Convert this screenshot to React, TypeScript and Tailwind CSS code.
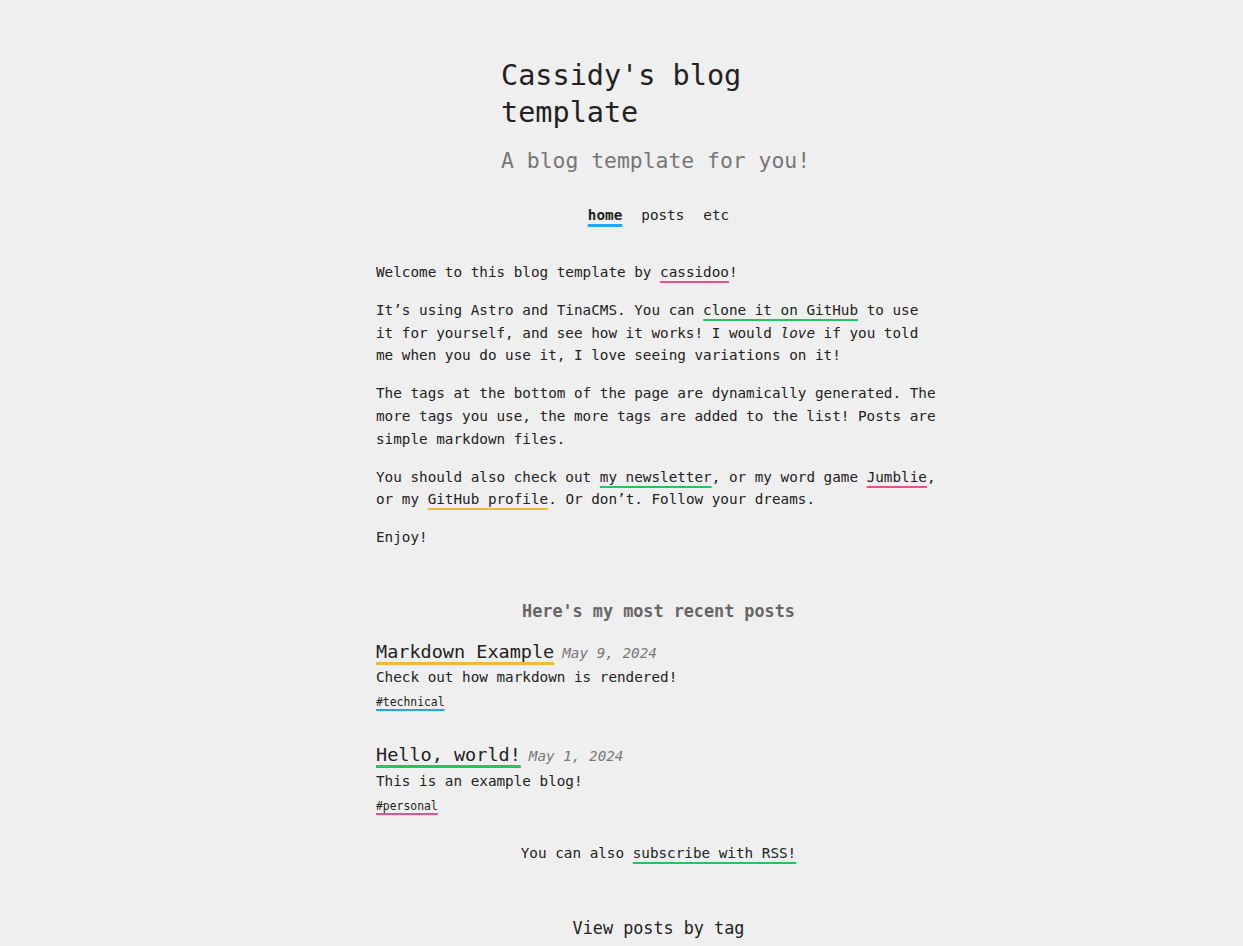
import React from "react";

const mono = "font-['DejaVu_Sans_Mono','Liberation_Mono',monospace]";

function A({ c, children }: { c: string; children: React.ReactNode }) {
  return (
    <a
      href="#"
      className={`underline decoration-2 underline-offset-[4px] ${c}`}
    >
      {children}
    </a>
  );
}

function Post({
  title,
  date,
  desc,
  tag,
  tc,
  gc,
}: {
  title: string;
  date: string;
  desc: string;
  tag: string;
  tc: string;
  gc: string;
}) {
  return (
    <div>
      <div className="leading-[26.5px]">
        <a
          href="#"
          className={`text-[18.5px] underline decoration-[3px] underline-offset-[4px] ${tc}`}
        >
          {title}
        </a>
        <span className="ml-2 text-[14.3px] italic text-[#777]">{date}</span>
      </div>
      <p className="leading-[22.8px]">{desc}</p>
      <div className="mt-[3px] leading-[18px]">
        <a
          href="#"
          className={`text-[11.4px] underline decoration-2 underline-offset-[3px] ${gc}`}
        >
          {tag}
        </a>
      </div>
    </div>
  );
}

export default function App() {
  return (
    <div className={`min-h-screen bg-[#efefef] text-[#222] ${mono} text-[14.3px]`}>
      <div className="ml-[376px] w-[565px] pt-[57px] pb-10">
        <header className="mx-auto w-[315px]">
          <h1 className="text-[28.5px] leading-[37px] text-[#222]">
            Cassidy's blog template
          </h1>
          <p className="mt-[15px] text-[21.4px] leading-[30px] text-[#777]">
            A blog template for you!
          </p>
        </header>
        <nav className="mt-[28px] flex justify-center gap-[19px] leading-[23px]">
          <a
            href="#"
            className="font-bold underline decoration-[3px] decoration-[#1ea7fd] underline-offset-[4px]"
          >
            home
          </a>
          <a href="#">posts</a>
          <a href="#">etc</a>
        </nav>
        <main className="mt-[34px] leading-[22.8px]">
          <div className="flex flex-col gap-[15px]">
            <p>
              Welcome to this blog template by{" "}
              <A c="decoration-[#ec4f8e]">cassidoo</A>!
            </p>
            <p>
              It’s using Astro and TinaCMS. You can{" "}
              <A c="decoration-[#22c55e]">clone it on GitHub</A> to use it for
              yourself, and see how it works! I would <em>love</em> if you told
              me when you do use it, I love seeing variations on it!
            </p>
            <p>
              The tags at the bottom of the page are dynamically generated. The
              more tags you use, the more tags are added to the list! Posts are
              simple markdown files.
            </p>
            <p>
              You should also check out{" "}
              <A c="decoration-[#22c55e]">my newsletter</A>, or my word game{" "}
              <A c="decoration-[#ec4f8e]">Jumblie</A>, or my{" "}
              <A c="decoration-[#f0b83a]">GitHub profile</A>. Or don’t. Follow
              your dreams.
            </p>
            <p>Enjoy!</p>
          </div>

          <h3 className="mt-[49px] text-center text-[16.8px] font-bold leading-[27px] text-[#666]">
            Here's my most recent posts
          </h3>
          <div className="mt-[14px] flex flex-col gap-[31px]">
            <Post
              title="Markdown Example"
              date="May 9, 2024"
              desc="Check out how markdown is rendered!"
              tag="#technical"
              tc="decoration-[#f0b83a]"
              gc="decoration-[#1ea7fd]"
            />
            <Post
              title="Hello, world!"
              date="May 1, 2024"
              desc="This is an example blog!"
              tag="#personal"
              tc="decoration-[#22c55e]"
              gc="decoration-[#ec4f8e]"
            />
          </div>
          <p className="mt-[27px] text-center">
            You can also{" "}
            <A c="decoration-[#22c55e]">subscribe with RSS!</A>
          </p>
          <h3 className="mt-[51px] text-center text-[16.8px] leading-[27px]">
            View posts by tag
          </h3>
        </main>
      </div>
    </div>
  );
}
